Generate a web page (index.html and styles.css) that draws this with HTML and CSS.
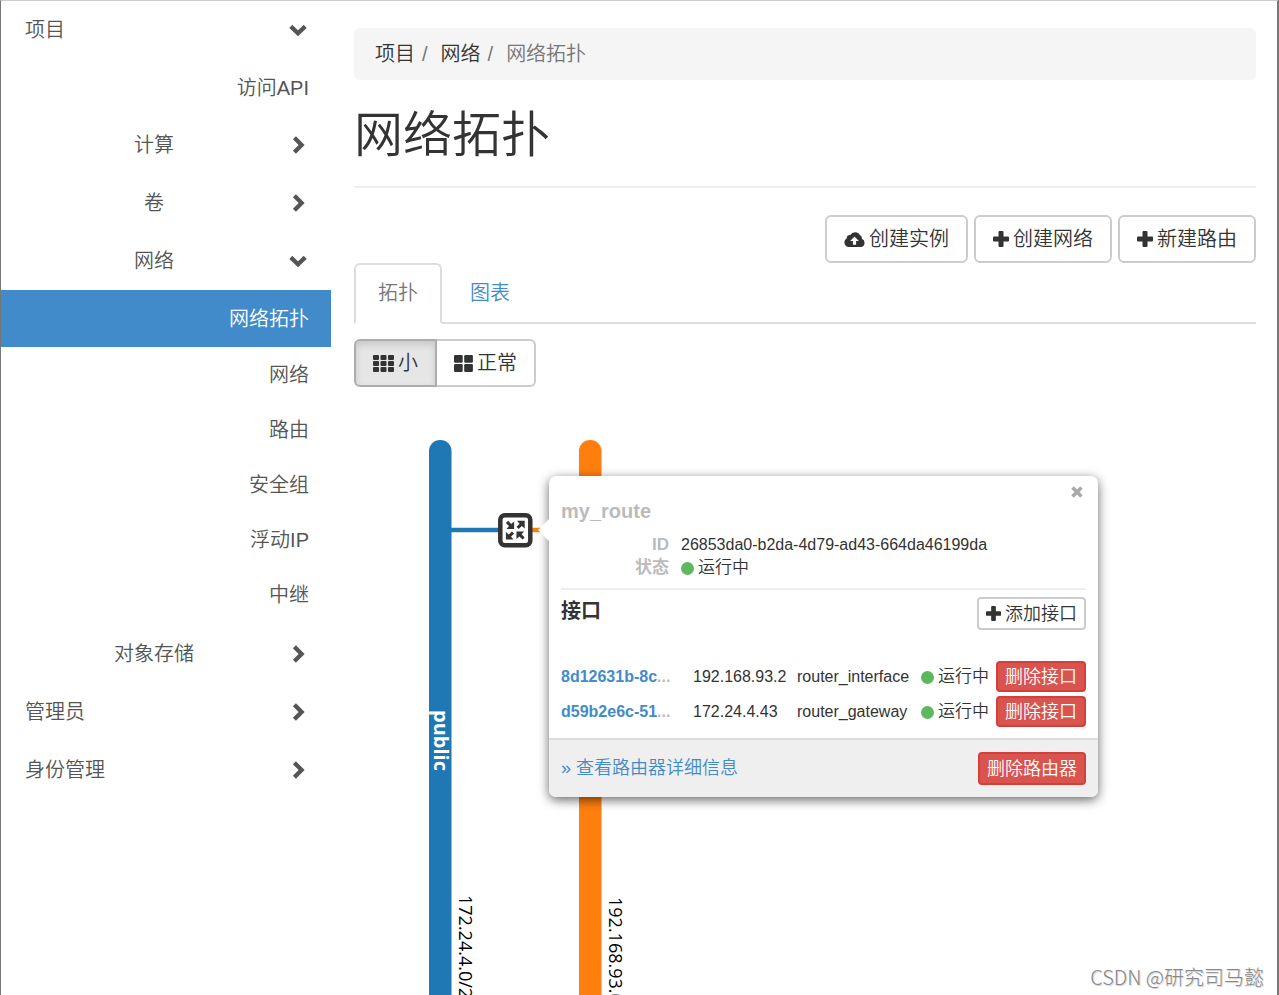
FILE: index.html
```html
<!DOCTYPE html>
<html lang="zh-CN">
<head>
<meta charset="utf-8">
<title>网络拓扑</title>
<link rel="stylesheet" href="styles.css">
</head>
<body>
<svg class="defs" aria-hidden="true">
  <symbol id="down" viewBox="0 0 18 18"><path d="M1.8 5.4 9 12.2l7.200-6.800" fill="none" stroke="currentColor" stroke-width="4.300"/></symbol>
  <symbol id="right" viewBox="0 0 18 18"><path d="M5.400 1.800 12.600 9l-7.200 7.200" fill="none" stroke="currentColor" stroke-width="4.300"/></symbol>
  <symbol id="plus" viewBox="0 0 16 16"><path d="M6.500 0h3q1 0 1 1v4.500H15q1 0 1 1v3q0 1-1 1h-4.500V15q0 1-1 1h-3q-1 0-1-1v-4.500H1q-1 0-1-1v-3q0-1 1-1h4.500V1q0-1 1-1z" fill="currentColor"/></symbol>
  <symbol id="cloud" viewBox="0 0 22 18"><path fill-rule="evenodd" d="M5 17a5 5 0 0 1-2.200-9.300A3.500 3.500 0 0 1 6.500 4.200 5.800 5.800 0 0 1 16.800 4.600 3.300 3.300 0 0 1 18.700 8.300 4.500 4.500 0 0 1 17.500 17zM11 5.800 6.400 10.600h2.900v4h3.400v-4h2.900z" fill="currentColor"/></symbol>
  <symbol id="grid9" viewBox="0 0 21 17"><g fill="currentColor"><rect width="6" height="5" rx="1"/><rect x="7.500" width="6" height="5" rx="1"/><rect x="15" width="6" height="5" rx="1"/><rect y="6" width="6" height="5" rx="1"/><rect x="7.500" y="6" width="6" height="5" rx="1"/><rect x="15" y="6" width="6" height="5" rx="1"/><rect y="12" width="6" height="5" rx="1"/><rect x="7.500" y="12" width="6" height="5" rx="1"/><rect x="15" y="12" width="6" height="5" rx="1"/></g></symbol>
  <symbol id="grid4" viewBox="0 0 19 17"><g fill="currentColor"><rect width="8.700" height="7.800" rx="1.200"/><rect x="10.200" width="8.700" height="7.800" rx="1.200"/><rect y="9.100" width="8.700" height="7.800" rx="1.200"/><rect x="10.200" y="9.100" width="8.700" height="7.800" rx="1.200"/></g></symbol>
  <symbol id="times" viewBox="0 0 12 12"><path d="M1.500 1.500l9 9m0-9l-9 9" stroke="currentColor" stroke-width="3.600"/></symbol>
</svg>
<div class="frame">
  <nav class="sidebar">
    <button class="group top"><span>项目</span><svg class="chev"><use href="#down"/></svg></button>
    <a class="item api" href="#">访问API</a>
    <button class="group"><span>计算</span><svg class="chev"><use href="#right"/></svg></button>
    <button class="group"><span>卷</span><svg class="chev"><use href="#right"/></svg></button>
    <button class="group"><span>网络</span><svg class="chev"><use href="#down"/></svg></button>
    <div class="items">
      <a class="item active" href="#">网络拓扑</a>
      <a class="item" href="#">网络</a>
      <a class="item" href="#">路由</a>
      <a class="item" href="#">安全组</a>
      <a class="item" href="#">浮动IP</a>
      <a class="item" href="#">中继</a>
    </div>
    <button class="group"><span>对象存储</span><svg class="chev"><use href="#right"/></svg></button>
    <button class="group top"><span>管理员</span><svg class="chev"><use href="#right"/></svg></button>
    <button class="group top"><span>身份管理</span><svg class="chev"><use href="#right"/></svg></button>
  </nav>
  <main class="main">
    <div class="breadcrumb"><a href="#">项目</a><i>/</i><a href="#">网络</a><i>/</i><span>网络拓扑</span></div>
    <h1>网络拓扑</h1>
    <div class="actions">
      <button class="btn"><svg width="21" height="17"><use href="#cloud"/></svg>创建实例</button>
      <button class="btn"><svg width="16" height="16"><use href="#plus"/></svg>创建网络</button>
      <button class="btn"><svg width="16" height="16"><use href="#plus"/></svg>新建路由</button>
    </div>
    <div class="tabs"><a class="tab current" href="#">拓扑</a><a class="tab" href="#">图表</a></div>
    <div class="sizes">
      <button class="btn pressed"><svg width="21" height="17"><use href="#grid9"/></svg>小</button>
      <button class="btn last"><svg width="19" height="17"><use href="#grid4"/></svg>正常</button>
    </div>
    <section class="canvas">
      <svg class="topology" width="300" height="700">
        <defs><path id="arrow" d="M2.200 0 5.300 3.100 8.200.6V8.200H.6L3.100 5.300 0 2.200z"/></defs>
        <rect x="75" y="53" width="22.500" height="800" rx="11" fill="#1f77b4"/>
        <rect x="225" y="53" width="22.500" height="800" rx="11" fill="#ff7f0e"/>
        <path d="M97 143h48" stroke="#1f77b4" stroke-width="4.500"/>
        <path d="M178 143h47" stroke="#ff7f0e" stroke-width="4.500"/>
        <rect x="146.300" y="128.300" width="30" height="30" rx="4.500" fill="#fff" stroke="#333" stroke-width="4.500"/>
        <g fill="#333" transform="translate(161.300 143.200)">
          <use href="#arrow" transform="translate(-9.400 -9.400)"/>
          <use href="#arrow" transform="translate(9.400 9.400) rotate(180)"/>
          <use href="#arrow" transform="translate(1.200 -1.200) scale(1 -1)"/>
          <use href="#arrow" transform="translate(-1.200 1.200) scale(-1 1)"/>
        </g>
        <text class="netname" transform="translate(80 323) rotate(90)">public</text>
        <text class="cidr" transform="translate(105 508) rotate(90)">172.24.4.0/24</text>
        <text class="cidr" transform="translate(255 510) rotate(90)">192.168.93.0/24</text>
      </svg>
      <div class="popup">
        <button class="close" aria-label="关闭"><svg width="12" height="12"><use href="#times"/></svg></button>
        <div class="body">
          <h2>my_route</h2>
          <dl>
            <dt>ID</dt><dd>26853da0-b2da-4d79-ad43-664da46199da</dd>
            <dt>状态</dt><dd class="status">运行中</dd>
          </dl>
          <div class="ports-head"><h3>接口</h3><button class="btn small"><svg width="15" height="15"><use href="#plus"/></svg>添加接口</button></div>
          <table>
            <colgroup><col class="c-id"><col class="c-ip"><col class="c-type"><col class="c-state"><col></colgroup>
            <tr><th><a href="#">8d12631b-8c</a>...</th><td>192.168.93.2</td><td>router_interface</td><td><span class="status">运行中</span></td><td><button class="btn small danger">删除接口</button></td></tr>
            <tr><th><a href="#">d59b2e6c-51</a>...</th><td>172.24.4.43</td><td>router_gateway</td><td><span class="status">运行中</span></td><td><button class="btn small danger">删除接口</button></td></tr>
          </table>
        </div>
        <div class="foot"><a href="#">» 查看路由器详细信息</a><button class="btn small danger">删除路由器</button></div>
      </div>
    </section>
  </main>
  <div class="watermark">CSDN @研究司马懿</div>
</div>
</body>
</html>
```

FILE: styles.css
```css
* { box-sizing: border-box; }
body {
  margin: 0;
  font: 350 20px/28px "Liberation Sans", "Noto Sans CJK SC", sans-serif;
  color: #333;
  background: #fff;
}
a { color: #428bca; text-decoration: none; }
button { font: inherit; color: inherit; cursor: pointer; }
svg { display: block; flex: none; }
.defs { position: absolute; width: 0; height: 0; }
.frame {
  position: relative;
  display: flex;
  height: 100vh;
  overflow: hidden;
  border: solid #777;
  border-width: 1px 2px 0 1px;
  border-top-color: #ccc;
}

/* sidebar */
.sidebar { flex: none; width: 330px; color: #555; }
.group {
  display: flex;
  align-items: center;
  width: 100%;
  height: 58px;
  padding: 0 24px;
  border: 0;
  background: none;
}
.group span { flex: 1; text-align: center; }
.group.top span { text-align: left; }
.chev { width: 18px; height: 18px; margin-left: 6px; }
.item {
  display: flex;
  align-items: center;
  justify-content: flex-end;
  height: 55px;
  padding-right: 22px;
  color: #555;
}
.item.api, .item.active { height: 57px; }
.item.active { background: #428bca; color: #fff; }
.items { padding-bottom: 3px; }

/* main column */
.main {
  flex: 1;
  min-width: 0;
  display: flex;
  flex-direction: column;
  padding: 27px 21px 0 23px;
}
.breadcrumb {
  display: flex;
  padding: 12px 21px;
  background: #f5f5f5;
  border-radius: 6px;
  color: #777;
}
.breadcrumb a { color: #333; }
.breadcrumb i { font-style: normal; margin: 0 13px 0 7px; }
h1 {
  margin: 0 0 27px;
  padding: 19px 0 15px;
  border-bottom: 2px solid #eee;
  font-size: 49px;
  font-weight: 350;
  line-height: 72px;
}
.btn {
  display: flex;
  align-items: center;
  gap: 4px;
  height: 48px;
  padding: 0 17px;
  border: 2px solid #ccc;
  border-radius: 6px;
  background: #fff;
  white-space: nowrap;
}
.actions { display: flex; justify-content: flex-end; gap: 6px; }
.tabs { display: flex; border-bottom: 2px solid #ddd; margin-bottom: 15px; }
.tab {
  height: 61px;
  margin-bottom: -2px;
  padding: 14px 22px;
  border: 2px solid transparent;
  border-radius: 6px 6px 0 0;
}
.tab + .tab { margin-left: 4px; }
.tab.current { color: #777; background: #fff; border-color: #ddd #ddd #fff; }
.sizes { display: flex; }
.sizes .pressed {
  border-color: #adadad;
  background: #e6e6e6;
  border-radius: 6px 0 0 6px;
  box-shadow: inset 0 4px 7px rgba(0, 0, 0, .13);
}
.sizes .last { border-left: 0; border-radius: 0 6px 6px 0; }

/* topology */
.canvas { position: relative; flex: 1; min-height: 0; }
.topology { position: absolute; left: 0; top: 0; overflow: visible; }
.netname { font: 700 20px "Open Sans", sans-serif; fill: #fff; }
.cidr { font: 400 18px "Open Sans", sans-serif; fill: #000; }
.popup {
  position: absolute;
  left: 195px;
  top: 89px;
  width: 549px;
  border-radius: 7px;
  background: #fff;
  box-shadow: 0 3px 11px rgba(0, 0, 0, .6);
  font-size: 16px;
  line-height: 23px;
}
.popup::before {
  content: "";
  position: absolute;
  left: -11px;
  top: 43px;
  width: 11px;
  height: 22px;
  background: #fff;
  clip-path: polygon(0 50%, 100% 0, 100% 100%);
}
.close {
  position: absolute;
  right: 15px;
  top: 10px;
  padding: 0;
  border: 0;
  background: none;
  color: #aaa;
}
.body { padding: 22px 12px 9px; }
h2 { margin: 0 0 9px; font-size: 20px; line-height: 26px; color: #bbb; }
dl {
  display: grid;
  grid-template-columns: 108px 1fr;
  column-gap: 12px;
  margin: 0;
  padding-bottom: 9px;
  border-bottom: 2px solid #eee;
}
dt { text-align: right; font-weight: 700; color: #bbb; font-size: 17px; }
dd { margin: 0; }
.status { display: flex; align-items: center; gap: 4px; font-size: 17px; white-space: nowrap; }
.status::before {
  content: "";
  width: 13px;
  height: 13px;
  margin-top: 2px;
  border-radius: 50%;
  background: #5cb85c;
}
.ports-head { display: flex; justify-content: space-between; padding-top: 7px; }
h3 { margin: 0; font-size: 20px; line-height: 28px; }
.btn.small { height: 33px; padding: 0 7px; border-radius: 4px; font-size: 18px; line-height: 26px; }
.btn.danger { border-color: #d43f3a; background: #d9534f; color: #fff; }
table { width: 100%; margin-top: 29px; table-layout: fixed; border-collapse: collapse; }
td, th { height: 35px; padding: 0; text-align: left; white-space: nowrap; }
th { color: #bbb; }
td .btn.small { height: 31px; margin-left: auto; }
.c-id { width: 132px; }
.c-ip { width: 104px; }
.c-type { width: 124px; }
.c-state { width: 74px; }
.foot {
  display: flex;
  align-items: center;
  justify-content: space-between;
  padding: 12px;
  border-top: 2px solid #ddd;
  border-radius: 0 0 7px 7px;
  background: #efefef;
  font-size: 18px;
}
.watermark {
  position: absolute;
  right: 13px;
  bottom: 4px;
  font-family: "Noto Sans CJK SC", sans-serif;
  font-weight: 300;
  color: #888;
  text-shadow: 1px 1px 1px #ccc;
}
```
